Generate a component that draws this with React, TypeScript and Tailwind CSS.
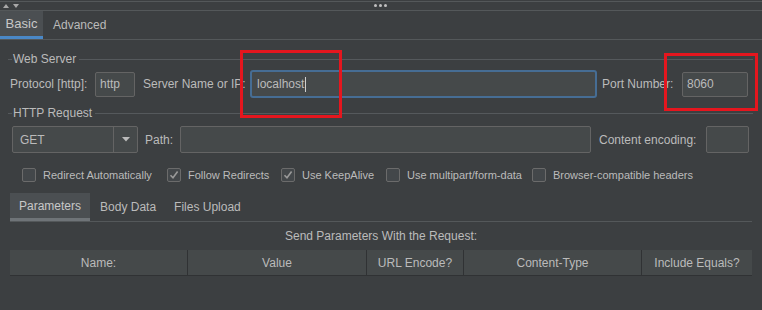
import React from "react";

const font = { fontFamily: '"Liberation Sans", Arial, sans-serif' };

function Legend({ label }: { label: string }) {
  return (
    <div className="flex items-center h-[14px] ml-[8px] mr-[9px]">
      <div className="w-[4px] h-px bg-[#55595c]" />
      <span className="px-[1px] leading-[14px]">{label}</span>
      <div className="flex-1 h-px bg-[#55595c] ml-[2px]" />
    </div>
  );
}

function Field({ w, h = 25, value }: { w: number; h?: number; value?: string }) {
  return (
    <div
      className="flex items-center px-[4px] bg-[#45494a] border border-[#646464] rounded-[2px]"
      style={{ width: w, height: h }}
    >
      {value}
    </div>
  );
}

function Check({ label, checked, w }: { label: string; checked?: boolean; w: number }) {
  return (
    <div className="flex items-center shrink-0" style={{ width: w }}>
      <div className="w-[14px] h-[14px] border border-[#6b6b6b] bg-[#43474a] rounded-[2px] flex items-center justify-center">
        {checked && (
          <svg width="10" height="10" viewBox="0 0 10 10">
            <path d="M1.5 5.2 L4 7.8 L8.6 1.6" fill="none" stroke="#9a9a9a" strokeWidth="1.6" />
          </svg>
        )}
      </div>
      <span className="ml-[7px] text-[11px]">{label}</span>
    </div>
  );
}

export default function App() {
  const cols = [
    { name: "Name:", w: 178 },
    { name: "Value", w: 179 },
    { name: "URL Encode?", w: 97 },
    { name: "Content-Type", w: 178 },
    { name: "Include Equals?", w: 110 },
  ];

  return (
    <div
      className="relative w-[762px] h-[310px] overflow-hidden bg-[#3c3f41] text-[#bbbbbb] text-[12px]"
      style={font}
    >
      {/* splitter bar */}
      <div className="mt-[1px] h-[10px] border-t border-b border-[#54585a] flex items-center relative">
        <svg width="22" height="6" viewBox="0 0 22 6" className="ml-[3px]">
          <path d="M0 5 L3 1 L6 5 Z" fill="#a8a8a8" />
          <path d="M10 1 L16 1 L13 5 Z" fill="#a8a8a8" />
        </svg>
        <div className="absolute left-[374px] top-[2px] flex gap-[2px]">
          <div className="w-[3px] h-[3px] bg-[#c0c0c0] rounded-full" />
          <div className="w-[3px] h-[3px] bg-[#c0c0c0] rounded-full" />
          <div className="w-[3px] h-[3px] bg-[#c0c0c0] rounded-full" />
        </div>
      </div>

      {/* top tabs */}
      <div className="flex h-[29px] border-b border-[#54585a]">
        <div className="w-[43px] bg-[#4b4f52] border-b-[3px] border-[#4a88c7] flex items-center justify-center text-[13px] text-[#c8c8c8]">
          Basic
        </div>
        <div className="pl-[10px] flex items-center text-[12px]">Advanced</div>
      </div>

      <div className="mt-[12px]">
        <Legend label="Web Server" />
      </div>

      <div className="mt-[4px] h-[28px] flex items-center pl-[10px]">
        <span className="w-[85px]">Protocol [http]:</span>
        <Field w={40} value="http" />
        <span className="ml-[8px] w-[107px]">Server Name or IP:</span>
        <div className="w-[347px] h-[28px] flex items-center px-[5px] bg-[#45494a] border-2 border-[#466d94] rounded-[3px]">
          localhost
          <span className="w-px h-[15px] bg-[#cfcfcf] ml-[1px]" />
        </div>
        <span className="ml-[5px] w-[80px]">Port Number:</span>
        <Field w={66} value="8060" />
      </div>

      <div className="mt-[8px]">
        <Legend label="HTTP Request" />
      </div>

      <div className="mt-[6px] h-[27px] flex items-center pl-[12px]">
        <div className="w-[126px] h-[27px] flex bg-[#45494a] border border-[#646464] rounded-[2px]">
          <div className="w-[101px] flex items-center pl-[7px] border-r border-[#646464]">GET</div>
          <div className="flex-1 flex items-center justify-center">
            <svg width="8" height="5" viewBox="0 0 8 5">
              <path d="M0 0 L8 0 L4 4.5 Z" fill="#bbbbbb" />
            </svg>
          </div>
        </div>
        <span className="ml-[7px] w-[35px]">Path:</span>
        <Field w={411} h={27} />
        <span className="ml-[8px] w-[107px]">Content encoding:</span>
        <Field w={43} h={27} />
      </div>

      <div className="mt-[15px] h-[14px] flex items-center pl-[22px]">
        <Check w={145} label="Redirect Automatically" />
        <Check w={114} label="Follow Redirects" checked />
        <Check w={105} label="Use KeepAlive" checked />
        <Check w={146} label="Use multipart/form-data" />
        <Check w={180} label="Browser-compatible headers" />
      </div>

      {/* parameter tabs */}
      <div className="mt-[11px] mx-[10px] h-[29px] flex border-b border-[#54585a]">
        <div className="px-[9px] bg-[#4b4f52] border-b-[3px] border-[#6f7478] flex items-center text-[#c8c8c8]">
          Parameters
        </div>
        <div className="pl-[10px] pr-[9px] flex items-center">Body Data</div>
        <div className="px-[9px] flex items-center">Files Upload</div>
      </div>

      <div className="mt-[7px] h-[14px] flex items-center justify-center leading-[14px]">
        Send Parameters With the Request:
      </div>

      <div className="mt-[7px] mx-[10px] h-[26px] flex bg-[#45494a] border-b border-[#303234]">
        {cols.map((c, i) => (
          <div
            key={c.name}
            className={
              i < cols.length - 1
                ? "flex items-center justify-center border-r border-[#303234]"
                : "flex items-center justify-center"
            }
            style={{ width: c.w }}
          >
            {c.name}
          </div>
        ))}
      </div>

      {/* highlight boxes */}
      <div className="absolute left-[240px] top-[50px] w-[102px] h-[68px] border-[3px] border-[#e5161e]" />
      <div className="absolute left-[664px] top-[53px] w-[94px] h-[58px] border-[3px] border-[#e5161e]" />
    </div>
  );
}
